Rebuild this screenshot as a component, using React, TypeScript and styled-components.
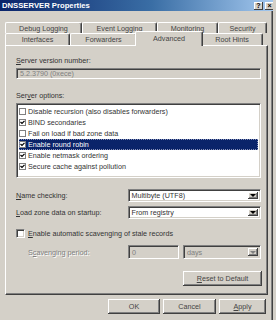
import React from 'react';
import styled, { createGlobalStyle, css } from 'styled-components';

const GlobalStyle = createGlobalStyle`
  html, body {
    margin: 0;
    padding: 0;
    background: #d4d0c8;
  }
  body {
    font-family: 'Liberation Sans', Arial, sans-serif;
    font-size: 7.2px;
    color: #333;
  }
`;

const FACE = '#d4d0c8';
const SHADOW = '#808080';
const DARK = '#404040';
const INK = '#333';

const Dialog = styled.div`
  width: 273px;
  height: 320px;
  background: ${FACE};
  box-shadow: inset -1px 0 ${DARK}, inset -2px 0 ${SHADOW};
  display: flex;
  flex-direction: column;
  overflow: hidden;
`;

const TitleBar = styled.div`
  width: 276px;
  height: 11px;
  box-sizing: border-box;
  display: flex;
  align-items: center;
  padding: 0 2px;
  background: linear-gradient(to right, #0a246a, #3a6ea5 55%, #a6caf0);
`;

const Title = styled.span`
  flex: 1;
  color: #fff;
  font-weight: bold;
  font-size: 7.7px;
  line-height: 11px;
`;

const CaptionButton = styled.span`
  width: 9px;
  height: 8px;
  margin-left: 2px;
  background: ${FACE};
  box-shadow: inset -1px -1px ${DARK}, inset 1px 1px #fff;
  font-size: 7px;
  font-weight: bold;
  line-height: 8px;
  text-align: center;
  color: #000;
`;

const TabArea = styled.div`
  margin-top: 11px;
  padding-left: 5px;
  display: flex;
  flex-direction: column;
`;

const TabRow = styled.div<{ h: number }>`
  display: flex;
  align-items: flex-end;
  height: ${(p) => p.h}px;
`;

const Tab = styled.div<{ w: number; active?: boolean }>`
  width: ${(p) => p.w}px;
  height: 100%;
  box-sizing: border-box;
  border-top: 1px solid #fff;
  border-left: 1px solid #fff;
  border-right: 1px solid ${DARK};
  box-shadow: inset -1px 0 ${SHADOW};
  border-radius: 2px 2px 0 0;
  display: flex;
  align-items: center;
  justify-content: center;
  background: ${FACE};
  color: #444;
  ${(p) =>
    p.active &&
    css`
      height: calc(100% + 3px);
      margin: 0 -2px -1px;
      width: ${p.w + 4}px;
      position: relative;
      z-index: 2;
      padding-bottom: 2px;
    `}
`;

const Panel = styled.div`
  width: 263px;
  height: 250px;
  box-sizing: border-box;
  border-top: 1px solid #fff;
  border-left: 1px solid #fff;
  border-right: 1px solid ${DARK};
  border-bottom: 1px solid ${DARK};
  box-shadow: inset -1px -1px ${SHADOW};
  padding: 0 6px 0 10px;
  display: flex;
  flex-direction: column;
  position: relative;
  z-index: 1;
`;

const Label = styled.div<{ mt: number; disabled?: boolean }>`
  margin-top: ${(p) => p.mt}px;
  line-height: 9px;
  height: 9px;
  color: ${(p) => (p.disabled ? SHADOW : INK)};
  text-shadow: ${(p) => (p.disabled ? '1px 1px #fff' : 'none')};
  white-space: nowrap;
`;

const Key = styled.span`
  text-decoration: underline;
`;

const sunken = css`
  box-sizing: border-box;
  border-top: 1px solid ${SHADOW};
  border-left: 1px solid ${SHADOW};
  border-right: 1px solid #fff;
  border-bottom: 1px solid #fff;
  box-shadow: inset 1px 1px ${DARK}, inset -1px -1px ${FACE};
`;

const ReadOnlyField = styled.div`
  ${sunken};
  margin-top: 3px;
  height: 11px;
  width: 245px;
  padding-left: 3px;
  line-height: 9px;
  color: ${SHADOW};
  background: ${FACE};
`;

const ListBox = styled.div`
  ${sunken};
  margin-top: 3px;
  width: 245px;
  height: 75px;
  background: #fff;
  padding: 2px 2px 0 2px;
  display: flex;
  flex-direction: column;
`;

const ListItem = styled.div<{ selected?: boolean }>`
  height: 11px;
  display: flex;
  align-items: center;
  gap: 2px;
  background: ${(p) => (p.selected ? '#0a246a' : 'transparent')};
  color: ${(p) => (p.selected ? '#fff' : INK)};
  outline: ${(p) => (p.selected ? '1px dotted #8a93b8' : 'none')};
  outline-offset: -1px;
  white-space: nowrap;
`;

const SmallCheck = styled.span`
  width: 7px;
  height: 7px;
  box-sizing: border-box;
  border: 1px solid ${SHADOW};
  background: #fff;
  display: inline-flex;
  align-items: center;
  justify-content: center;
`;

const BigCheck = styled.span`
  width: 9px;
  height: 9px;
  ${sunken};
  background: #fff;
  display: inline-block;
`;

const FieldRow = styled.div<{ mt: number }>`
  margin-top: ${(p) => p.mt}px;
  display: flex;
  align-items: center;
`;

const RowLabel = styled.span<{ disabled?: boolean; indent?: number }>`
  width: ${(p) => 112 - (p.indent ?? 0)}px;
  padding-left: ${(p) => p.indent ?? 0}px;
  color: ${(p) => (p.disabled ? SHADOW : INK)};
  text-shadow: ${(p) => (p.disabled ? '1px 1px #fff' : 'none')};
  white-space: nowrap;
`;

const Combo = styled.div<{ w: number; h: number; disabled?: boolean }>`
  ${sunken};
  width: ${(p) => p.w}px;
  height: ${(p) => p.h}px;
  background: ${(p) => (p.disabled ? FACE : '#fff')};
  display: flex;
  align-items: stretch;
  padding: 2px;
`;

const ComboText = styled.span<{ disabled?: boolean }>`
  flex: 1;
  padding-left: 1px;
  display: flex;
  align-items: center;
  color: ${(p) => (p.disabled ? SHADOW : INK)};
`;

const DropButton = styled.span`
  width: 10px;
  background: ${FACE};
  box-shadow: inset -1px -1px ${DARK}, inset 1px 1px #fff, inset -2px -2px ${SHADOW};
  display: flex;
  align-items: center;
  justify-content: center;
`;

const Arrow = styled.span<{ disabled?: boolean }>`
  width: 0;
  height: 0;
  border-left: 3px solid transparent;
  border-right: 3px solid transparent;
  border-top: 3px solid ${(p) => (p.disabled ? SHADOW : '#000')};
`;

const TextBox = styled.div`
  ${sunken};
  width: 51px;
  height: 14px;
  margin-right: 4px;
  background: ${FACE};
  color: ${SHADOW};
  padding-left: 3px;
  display: flex;
  align-items: center;
`;

const CheckRow = styled.div`
  margin-top: 9px;
  display: flex;
  align-items: center;
  gap: 3px;
  height: 11px;
  color: ${INK};
`;

const Button = styled.button<{ w: number }>`
  width: ${(p) => p.w}px;
  height: 15px;
  padding: 0;
  font: inherit;
  color: #444;
  background: ${FACE};
  border: none;
  box-shadow: inset -1px -1px ${DARK}, inset 1px 1px #fff, inset -2px -2px ${SHADOW};
`;

const ResetRow = styled.div`
  margin-top: 12px;
  display: flex;
  justify-content: flex-end;
  width: 246px;
`;

const Footer = styled.div`
  margin-top: 4px;
  padding-right: 7px;
  display: flex;
  justify-content: flex-end;
  gap: 3px;
`;

const Tick = ({ color = '#000' }: { color?: string }) => (
  <svg width="5" height="5" viewBox="0 0 5 5">
    <path d="M0.5 2 L2 3.5 L4.5 0.8" stroke={color} strokeWidth="1.2" fill="none" />
  </svg>
);

const options = [
  { text: 'Disable recursion (also disables forwarders)', checked: false },
  { text: 'BIND secondaries', checked: true },
  { text: 'Fail on load if bad zone data', checked: false },
  { text: 'Enable round robin', checked: true, selected: true },
  { text: 'Enable netmask ordering', checked: true },
  { text: 'Secure cache against pollution', checked: true },
];

export default function App() {
  return (
    <>
      <GlobalStyle />
      <Dialog>
        <TitleBar>
          <Title>DNSSERVER Properties</Title>
          <CaptionButton>?</CaptionButton>
          <CaptionButton>×</CaptionButton>
        </TitleBar>
        <TabArea>
          <TabRow h={11}>
            <Tab w={77}>Debug Logging</Tab>
            <Tab w={75}>Event Logging</Tab>
            <Tab w={61}>Monitoring</Tab>
            <Tab w={49}>Security</Tab>
          </TabRow>
          <TabRow h={12}>
            <Tab w={65}>Interfaces</Tab>
            <Tab w={67}>Forwarders</Tab>
            <Tab w={64} active>
              Advanced
            </Tab>
            <Tab w={62}>Root Hints</Tab>
          </TabRow>
          <Panel>
            <Label mt={10}>
              <Key>S</Key>erver version number:
            </Label>
            <ReadOnlyField>5.2.3790 (0xece)</ReadOnlyField>
            <Label mt={12}>
              Ser<Key>v</Key>er options:
            </Label>
            <ListBox>
              {options.map((o) => (
                <ListItem key={o.text} selected={o.selected}>
                  <SmallCheck>{o.checked && <Tick />}</SmallCheck>
                  {o.text}
                </ListItem>
              ))}
            </ListBox>
            <FieldRow mt={11}>
              <RowLabel>
                <Key>N</Key>ame checking:
              </RowLabel>
              <Combo w={134} h={13}>
                <ComboText>Multibyte (UTF8)</ComboText>
                <DropButton>
                  <Arrow />
                </DropButton>
              </Combo>
            </FieldRow>
            <FieldRow mt={4}>
              <RowLabel>
                <Key>L</Key>oad zone data on startup:
              </RowLabel>
              <Combo w={134} h={13}>
                <ComboText>From registry</ComboText>
                <DropButton>
                  <Arrow />
                </DropButton>
              </Combo>
            </FieldRow>
            <CheckRow>
              <BigCheck />
              <span>
                <Key>E</Key>nable automatic scavenging of stale records
              </span>
            </CheckRow>
            <FieldRow mt={6}>
              <RowLabel disabled indent={12}>
                S<Key>c</Key>avenging period:
              </RowLabel>
              <TextBox>0</TextBox>
              <Combo w={78} h={14} disabled>
                <ComboText disabled>days</ComboText>
                <DropButton>
                  <Arrow disabled />
                </DropButton>
              </Combo>
            </FieldRow>
            <ResetRow>
              <Button w={79}>
                <Key>R</Key>eset to Default
              </Button>
            </ResetRow>
          </Panel>
        </TabArea>
        <Footer>
          <Button w={52}>OK</Button>
          <Button w={53}>Cancel</Button>
          <Button w={47}>
            <Key>A</Key>pply
          </Button>
        </Footer>
      </Dialog>
    </>
  );
}
